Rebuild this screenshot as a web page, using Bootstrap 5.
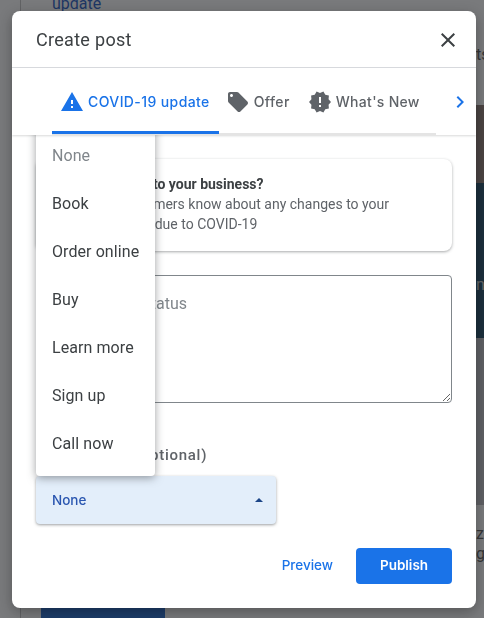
<!DOCTYPE html>
<html lang="en">
<head>
  <meta charset="UTF-8">
  <meta name="viewport" content="width=device-width, initial-scale=1">
  <title>Create post</title>
  <link href="https://cdn.jsdelivr.net/npm/bootstrap@5.3.0/dist/css/bootstrap.min.css" rel="stylesheet">
  <style>
    body { font-family: Roboto, "Liberation Sans", sans-serif; background: #fff; overflow: hidden; }

    /* page behind the dialog */
    .back-page { height: 618px; overflow: hidden; }
    .back-rail { width: 21px; border-right: 1px solid #c4c4c4; }
    .back-main { width: 455px; padding-left: 20px; }
    .back-link { color: #1a56c4; font-size: 16px; line-height: 20px; margin: -6px 0 0 11px; }
    .back-cta { width: 124px; height: 10px; background: #1a66d0; }
    .back-side { width: 8px; font-size: 16px; white-space: nowrap; color: #555; }
    .strip-top { height: 105px; padding-top: 43px; }
    .strip-brown { height: 78px; background: #8c7871; }
    .strip-teal { height: 155px; background: #164460; color: #ccc; padding-top: 90px; }
    .strip-grey { height: 167px; background: #bebec4; }
    .strip-end { padding-top: 19px; line-height: 20px; }

    /* dialog */
    .dim-layer { background: rgba(32, 33, 36, .6); }
    .dialog-box { width: 464px; max-width: none; margin: 11px 0 0 12px; }
    .dialog-panel { height: 597px; border: 0; border-radius: 8px; box-shadow: 0 4px 14px rgba(0, 0, 0, .3); }
    .dialog-head { height: 57px; padding: 1px 16px 0 24px; border-bottom: 1px solid #dadce0; }
    .dialog-title { font-size: 18px; font-weight: 400; letter-spacing: .3px; color: #3c4043; margin: 0; }
    .close-x { padding: 0; border: 0; background: none; line-height: 0; }

    .tab-bar { height: 67px; padding-left: 40px; background: #fff; position: relative; z-index: 1100; box-shadow: 0 1px 2px rgba(60, 64, 67, .2); }
    .tab-list { width: 384px; border-bottom: 2px solid #e4e4e4; flex-wrap: nowrap; }
    .tab-item { height: 65px; padding: 22px 8px 0; gap: 4px; font-family: Inter, Roboto, sans-serif; font-size: 14px; line-height: 24px; font-weight: 500; letter-spacing: .4px; color: #5f6368; white-space: nowrap; }
    .tab-item svg { fill: #5f6368; }
    .tab-item.is-active { color: #1a73e8; margin-bottom: -2px; height: 66px; padding-right: 9px; border-bottom: 3px solid #1a73e8; }
    .tab-item.is-active svg { fill: #1a73e8; }
    .tab-offer { margin-left: -1px; padding-right: 10px; }
    .tab-news { letter-spacing: .3px; }
    .tab-next { height: 67px; margin-left: 12px; padding-top: 1px; }

    .dialog-body { padding: 24px; }
    .note-box { height: 92px; border-radius: 8px; box-shadow: 0 1px 3px rgba(60, 64, 67, .45); padding: 15px 16px 0 29px; font-size: 14px; line-height: 20px; color: #5f6368; }
    .note-title { font-weight: 700; color: #3c4043; }
    .status-input { height: 128px; margin-top: 24px; padding: 16px; border: 1px solid #80868b; border-radius: 4px; font-size: 16px; line-height: 24px; color: #3c4043; }
    .status-input::placeholder { color: #80868b; }
    .btn-label { margin: 43px 0 12px; font-size: 15px; line-height: 18px; font-weight: 500; letter-spacing: .72px; color: #5f6368; white-space: nowrap; }

    .pick-wrap { width: 240px; }
    .pick-btn { width: 100%; height: 48px; padding: 0 13px 0 16px; border: 0; border-radius: 4px; background: #e3eefa; color: #2a56b0; font-family: Inter, Roboto, sans-serif; font-size: 13.5px; font-weight: 500; box-shadow: 0 1px 3px rgba(60, 64, 67, .5); }
    .pick-menu { width: 119px; min-width: 0; left: 0; bottom: 100%; padding: 8px 0; border: 0; border-radius: 4px; box-shadow: 0 2px 8px rgba(60, 64, 67, .5); }
    .pick-menu .dropdown-item { height: 48px; padding: 0 16px; font-size: 16px; line-height: 48px; letter-spacing: .08px; color: #3c4043; }
    .pick-menu .dropdown-item.is-none { color: #80868b; }

    .dialog-foot { margin-top: 24px; gap: 23px; }
    .ghost-btn { padding: 0 0 2px; border: 0; background: none; color: #1a73e8; font-family: Inter, Roboto, sans-serif; font-size: 13.5px; font-weight: 500; }
    .publish-btn { width: 96px; height: 36px; padding: 0 0 2px; border: 0; border-radius: 4px; background: #1a73e8; color: #fff; font-family: Inter, Roboto, sans-serif; font-size: 13.5px; font-weight: 600; }
  </style>
</head>
<body>

<!-- Page behind the dialog -->
<div class="back-page d-flex">
  <div class="back-rail"></div>
  <div class="back-main d-flex flex-column justify-content-between">
    <div class="back-link">update</div>
    <div class="back-cta"></div>
  </div>
  <div class="back-side overflow-hidden">
    <div class="strip-top">ts</div>
    <div class="strip-brown"></div>
    <div class="strip-teal">nn</div>
    <div class="strip-grey"></div>
    <div class="strip-end">ze<br>ga</div>
  </div>
</div>

<!-- Create post dialog -->
<div class="modal d-block dim-layer">
  <div class="modal-dialog dialog-box">
    <div class="modal-content dialog-panel">
      <div class="dialog-head d-flex align-items-center justify-content-between">
        <h5 class="dialog-title">Create post</h5>
        <button type="button" class="close-x" aria-label="Close">
          <svg width="24" height="24" viewBox="0 0 24 24" fill="#3c4043"><path d="M19 6.41L17.59 5 12 10.59 6.41 5 5 6.41 10.59 12 5 17.59 6.41 19 12 13.41 17.59 19 19 17.59 13.41 12z"/></svg>
        </button>
      </div>

      <div class="tab-bar d-flex align-items-start">
        <div class="tab-list nav">
          <div class="tab-item is-active d-flex">
            <svg width="24" height="24" viewBox="0 0 24 24"><path d="M1 21h22L12 2 1 21zm12-3h-2v-2h2v2zm0-4h-2v-4h2v4z"/></svg>
            COVID-19 update
          </div>
          <div class="tab-item tab-offer d-flex">
            <svg width="24" height="24" viewBox="0 0 24 24"><path d="M21.41 11.58l-9-9C12.05 2.22 11.55 2 11 2H4c-1.1 0-2 .9-2 2v7c0 .55.22 1.05.59 1.42l9 9c.36.36.86.58 1.41.58.55 0 1.05-.22 1.41-.59l7-7c.37-.36.59-.86.59-1.41 0-.55-.23-1.06-.59-1.42zM5.5 7C4.67 7 4 6.33 4 5.5S4.67 4 5.5 4 7 4.67 7 5.5 6.33 7 5.5 7z"/></svg>
            Offer
          </div>
          <div class="tab-item tab-news d-flex">
            <svg width="24" height="24" viewBox="0 0 24 24"><path d="M23 12l-2.44-2.78.34-3.68-3.61-.82-1.89-3.18L12 3 8.6 1.54 6.71 4.72l-3.61.81.34 3.68L1 12l2.44 2.78-.34 3.69 3.61.82 1.89 3.18L12 21l3.4 1.46 1.89-3.18 3.61-.82-.34-3.68L23 12zm-10 5h-2v-2h2v2zm0-4h-2V7h2v6z"/></svg>
            What's New
          </div>
        </div>
        <div class="tab-next d-flex align-items-center">
          <svg width="24" height="24" viewBox="0 0 24 24" fill="#1a73e8"><path d="M10 6L8.59 7.41 13.17 12l-4.58 4.59L10 18l6-6z"/></svg>
        </div>
      </div>

      <div class="dialog-body">
        <div class="note-box">
          <div class="note-title">New changes to your business?</div>
          <div>Let your customers know about any changes to your</div>
          <div>your business due to COVID-19</div>
        </div>

        <textarea class="form-control status-input" placeholder="Update your status"></textarea>

        <div class="btn-label">Add a button (optional)</div>

        <div class="pick-wrap position-relative">
          <div class="dropdown-menu show pick-menu">
            <a class="dropdown-item is-none" href="#">None</a>
            <a class="dropdown-item" href="#">Book</a>
            <a class="dropdown-item" href="#">Order online</a>
            <a class="dropdown-item" href="#">Buy</a>
            <a class="dropdown-item" href="#">Learn more</a>
            <a class="dropdown-item" href="#">Sign up</a>
            <a class="dropdown-item" href="#">Call now</a>
          </div>
          <button type="button" class="pick-btn d-flex align-items-center justify-content-between">
            None
            <svg width="8" height="4" viewBox="0 0 8 4" fill="#1c4587"><path d="M0 4L4 0l4 4z"/></svg>
          </button>
        </div>

        <div class="dialog-foot d-flex justify-content-end align-items-center">
          <button type="button" class="ghost-btn">Preview</button>
          <button type="button" class="publish-btn">Publish</button>
        </div>
      </div>
    </div>
  </div>
</div>

<script src="https://cdn.jsdelivr.net/npm/bootstrap@5.3.0/dist/js/bootstrap.bundle.min.js"></script>
</body>
</html>
